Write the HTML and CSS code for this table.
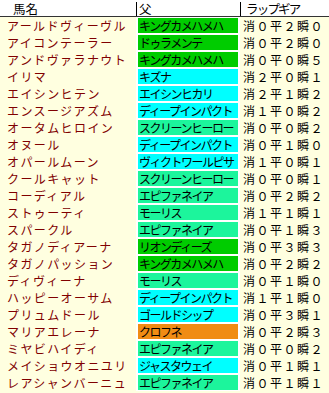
FILE: index.html
```html
<!DOCTYPE html>
<html lang="ja">
<head>
<meta charset="utf-8">
<title>ラップギア</title>
<link rel="stylesheet" href="styles.css">
</head>
<body>
<div class="table">
  <div class="head">
    <div class="h-name">馬名</div>
    <div class="h-sire">父</div>
    <div class="h-lap">ラップギア</div>
  </div>
  <div class="row"><div class="name">アールドヴィーヴル</div><div class="sire green">キングカメハメハ</div><div class="lap">消０平２瞬０</div></div>
  <div class="row"><div class="name">アイコンテーラー</div><div class="sire green">ドゥラメンテ</div><div class="lap">消０平２瞬０</div></div>
  <div class="row"><div class="name">アンドヴァラナウト</div><div class="sire green">キングカメハメハ</div><div class="lap">消０平０瞬５</div></div>
  <div class="row"><div class="name">イリマ</div><div class="sire cyan">キズナ</div><div class="lap">消２平０瞬１</div></div>
  <div class="row"><div class="name">エイシンヒテン</div><div class="sire cyan">エイシンヒカリ</div><div class="lap">消２平１瞬２</div></div>
  <div class="row"><div class="name">エンスージアズム</div><div class="sire cyan">ディープインパクト</div><div class="lap">消１平０瞬２</div></div>
  <div class="row"><div class="name">オータムヒロイン</div><div class="sire spring">スクリーンヒーロー</div><div class="lap">消０平０瞬２</div></div>
  <div class="row"><div class="name">オヌール</div><div class="sire cyan">ディープインパクト</div><div class="lap">消０平１瞬０</div></div>
  <div class="row"><div class="name">オパールムーン</div><div class="sire cyan">ヴィクトワールピサ</div><div class="lap">消１平０瞬１</div></div>
  <div class="row"><div class="name">クールキャット</div><div class="sire spring">スクリーンヒーロー</div><div class="lap">消０平０瞬１</div></div>
  <div class="row"><div class="name">コーディアル</div><div class="sire spring">エピファネイア</div><div class="lap">消０平２瞬２</div></div>
  <div class="row"><div class="name">ストゥーティ</div><div class="sire spring">モーリス</div><div class="lap">消１平１瞬１</div></div>
  <div class="row"><div class="name">スパークル</div><div class="sire spring">エピファネイア</div><div class="lap">消０平１瞬３</div></div>
  <div class="row"><div class="name">タガノディアーナ</div><div class="sire green">リオンディーズ</div><div class="lap">消０平３瞬３</div></div>
  <div class="row"><div class="name">タガノパッション</div><div class="sire green">キングカメハメハ</div><div class="lap">消０平２瞬２</div></div>
  <div class="row"><div class="name">ディヴィーナ</div><div class="sire spring">モーリス</div><div class="lap">消０平１瞬０</div></div>
  <div class="row"><div class="name">ハッピーオーサム</div><div class="sire cyan">ディープインパクト</div><div class="lap">消１平１瞬０</div></div>
  <div class="row"><div class="name">プリュムドール</div><div class="sire cyan">ゴールドシップ</div><div class="lap">消０平３瞬１</div></div>
  <div class="row"><div class="name">マリアエレーナ</div><div class="sire orange">クロフネ</div><div class="lap">消０平２瞬３</div></div>
  <div class="row"><div class="name">ミヤビハイディ</div><div class="sire spring">エピファネイア</div><div class="lap">消０平０瞬２</div></div>
  <div class="row"><div class="name">メイショウオニユリ</div><div class="sire cyan">ジャスタウェイ</div><div class="lap">消０平１瞬１</div></div>
  <div class="row"><div class="name">レアシャンバーニュ</div><div class="sire spring">エピファネイア</div><div class="lap">消０平１瞬１</div></div>
</div>
</body>
</html>
```

FILE: styles.css
```css
html, body {
  margin: 0;
  padding: 0;
  background: #ffffe0;
}

body {
  font-family: "Noto Sans CJK JP", "Noto Sans", sans-serif;
  font-size: 12px;
  color: #000;
}

.table {
  width: 329px;
}

.head {
  display: grid;
  grid-template-columns: 136px 104px 89px;
  height: 16px;
  background: #fff;
  border-bottom: 1px solid #333;
  font-size: 12.5px;
  line-height: 15px;
}

.h-name {
  padding-top: 1px;
  padding-left: 13px;
}

.h-sire,
.h-lap {
  margin-top: 2px;
  border-left: 1px solid #000;
  line-height: 14px;
  padding-left: 2px;
  white-space: nowrap;
}

.h-lap {
  padding-left: 5px;
  letter-spacing: -1.8px;
}

.row {
  display: grid;
  grid-template-columns: 136px 104px 89px;
  height: 17px;
}

.name {
  color: #800000;
  padding-left: 7px;
  line-height: 17px;
  letter-spacing: 1.4px;
  white-space: nowrap;
}

.sire {
  border-style: solid;
  border-color: #fff;
  border-width: 1px 2px 1px 2px;
  line-height: 15px;
  font-size: 12px;
  letter-spacing: -1.5px;
  padding-left: 1px;
  white-space: nowrap;
  overflow: hidden;
}

.green { background: #00cc00; }
.cyan { background: #00ffff; }
.spring { background: #1cf59c; }
.orange { background: #f08c14; }

.lap {
  padding-left: 3px;
  line-height: 17px;
  letter-spacing: 1.5px;
  white-space: nowrap;
}
```
